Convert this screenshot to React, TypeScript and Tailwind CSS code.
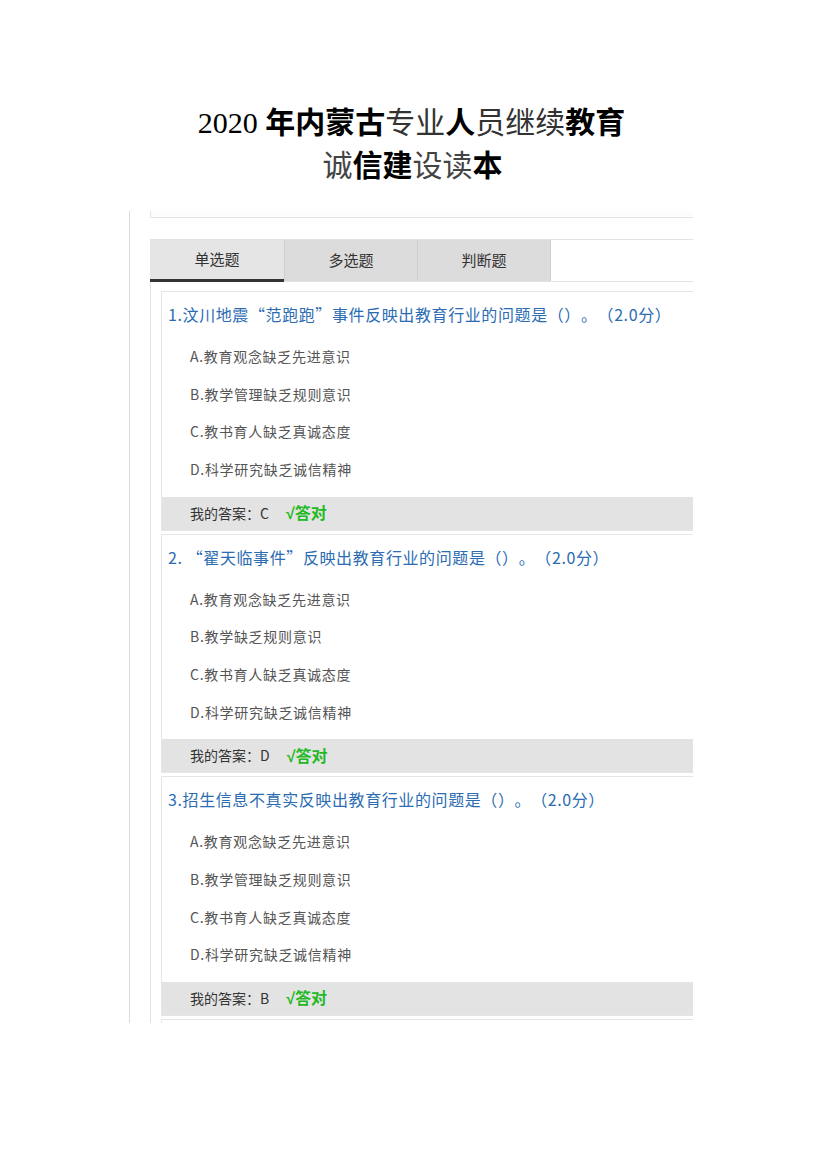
import React from 'react'

interface Question {
  no: string
  title: string
  options: string[]
  answer: string
}

const questions: Question[] = [
  {
    no: '1.',
    title: '汶川地震“范跑跑”事件反映出教育行业的问题是（）。（2.0分）',
    options: ['A.教育观念缺乏先进意识', 'B.教学管理缺乏规则意识', 'C.教书育人缺乏真诚态度', 'D.科学研究缺乏诚信精神'],
    answer: 'C'
  },
  {
    no: '2. ',
    title: '“翟天临事件”反映出教育行业的问题是（）。（2.0分）',
    options: ['A.教育观念缺乏先进意识', 'B.教学缺乏规则意识', 'C.教书育人缺乏真诚态度', 'D.科学研究缺乏诚信精神'],
    answer: 'D'
  },
  {
    no: '3.',
    title: '招生信息不真实反映出教育行业的问题是（）。（2.0分）',
    options: ['A.教育观念缺乏先进意识', 'B.教学管理缺乏规则意识', 'C.教书育人缺乏真诚态度', 'D.科学研究缺乏诚信精神'],
    answer: 'B'
  }
]

const tabs = ['单选题', '多选题', '判断题']

function QuestionCard({ q }: { q: Question }) {
  return (
    <div className="border border-[#e6e6e6] bg-white mb-[3px] w-[540px] shrink-0">
      <div className="pl-[6px] pt-[10px] h-[34px] text-[16px] leading-[24px] tracking-[0.6px] text-[#2b6cb3] whitespace-nowrap [text-spacing-trim:space-all]">
        {q.no}
        {q.title}
      </div>
      <div className="mt-[12px] pl-[28px]">
        {q.options.map((o, i) => (
          <div key={i} className="h-[37.67px] leading-[37.67px] text-[14px] tracking-[0.7px] text-[#555] whitespace-nowrap">
            {o}
          </div>
        ))}
      </div>
      <div className="mt-[8px] h-[33px] bg-[#e3e3e3] flex items-center pl-[28px] whitespace-nowrap">
        <span className="text-[14px] text-[#333]">我的答案：{q.answer}</span>
        <span className="ml-[17px] text-[16px] font-bold text-[#22b922]">
          <span style={{ fontFamily: '"Liberation Sans", sans-serif' }}>√</span>答对
        </span>
      </div>
    </div>
  )
}

export default function App() {
  return (
    <div
      className="w-[825px] h-[1168px] bg-white overflow-hidden"
      style={{ fontFamily: '"Noto Sans CJK SC", "Noto Sans", sans-serif' }}
    >
      {/* document heading */}
      <div className="pt-[100px] flex flex-col items-center text-[30px] leading-[41px]">
        <div className="whitespace-nowrap pr-[2px]">
          <span className="text-black" style={{ fontFamily: '"Liberation Serif", serif' }}>
            2020{' '}
          </span>
          <span className="font-bold text-black">年内蒙古</span>
          <span className="text-[#333]">专业</span>
          <span className="font-bold text-black">人</span>
          <span className="text-[#333]">员继续</span>
          <span className="font-bold text-black">教育</span>
        </div>
        <div className="whitespace-nowrap">
          <span className="text-[#444]">诚</span>
          <span className="font-bold text-black">信建</span>
          <span className="text-[#444]">设读</span>
          <span className="font-bold text-black">本</span>
        </div>
      </div>

      {/* embedded screenshot */}
      <div className="ml-[129px] mt-[27px] w-[564px] h-[812px] overflow-hidden flex">
        <div className="w-px bg-[#dcdcdc] shrink-0" />
        <div className="ml-[20px] flex-1 flex flex-col">
          <div className="h-[7px] shrink-0 border-l border-b border-[#e3e3e3] bg-[#fcfcfc]" />
          <div className="h-[21px] shrink-0" />
          <div className="flex h-[43px] shrink-0 border-t border-b border-[#e3e3e3]">
            {tabs.map((t, i) => (
              <div
                key={t}
                className={
                  i === 0
                    ? 'w-[134px] bg-[#e5e5e5] border-b-[3px] border-[#333] flex items-center justify-center text-[15px] text-[#333] -mb-px'
                    : 'w-[133px] bg-[#dcdcdc] border-l border-[#cfcfcf] flex items-center justify-center text-[15px] text-[#333]'
                }
              >
                {t}
              </div>
            ))}
            <div className="border-l border-[#cfcfcf]" />
          </div>
          <div className="flex-1 border-l border-[#e3e3e3] pl-[10px] pt-[9px] flex flex-col">
            {questions.map((q, i) => (
              <QuestionCard key={i} q={q} />
            ))}
            <div className="w-[540px] h-[40px] shrink-0 border border-[#e6e6e6] bg-white" />
          </div>
        </div>
      </div>
    </div>
  )
}
